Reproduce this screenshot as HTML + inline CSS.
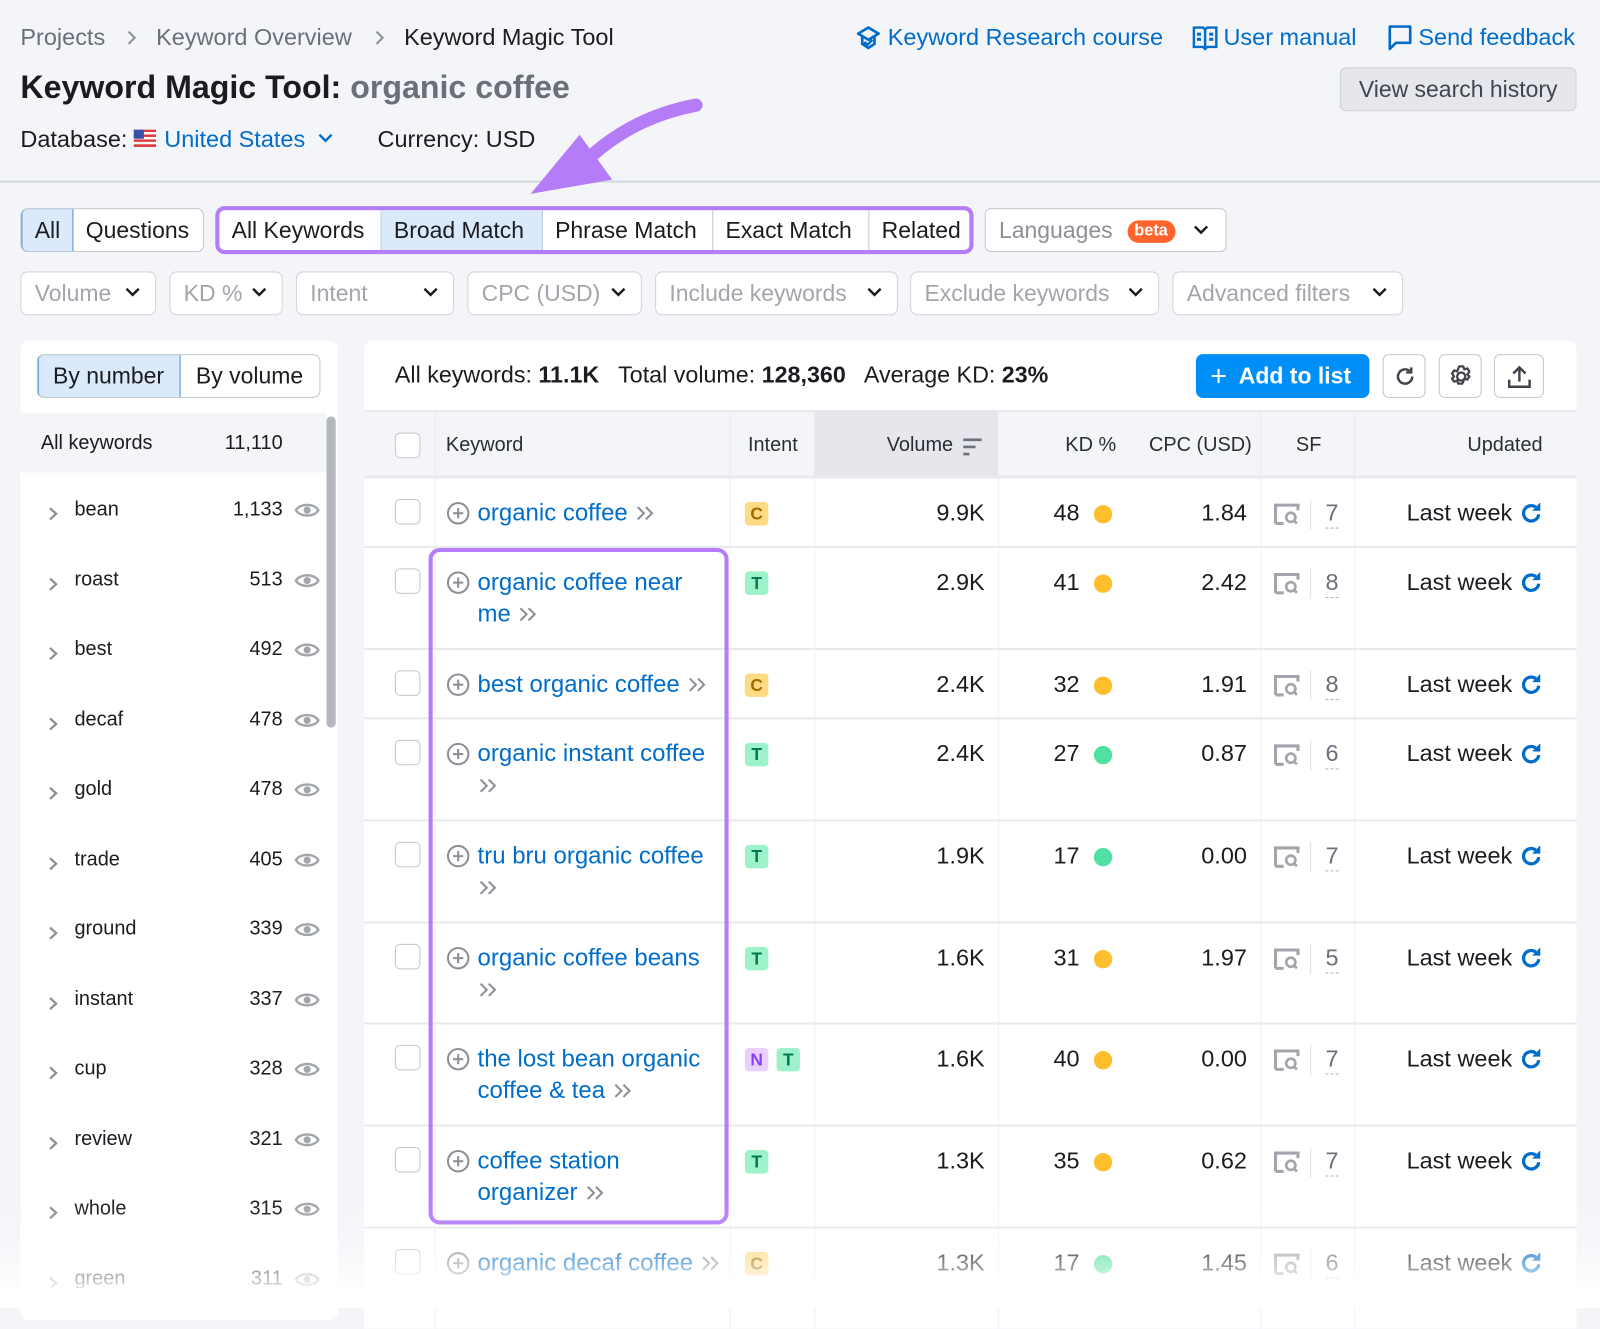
<!DOCTYPE html>
<html><head><meta charset="utf-8"><style>
*{box-sizing:border-box;margin:0;padding:0}
html,body{width:1600px;height:1303px;overflow:hidden;background:#f4f5f9}
body{font-family:"Liberation Sans",sans-serif;color:#1b1c21}
#w{position:absolute;left:0;top:0;width:1568px;height:1277px;transform:scale(1.020408);transform-origin:0 0;background:#f4f5f9}
.a{position:absolute;white-space:nowrap}
.bc{font-size:23px;color:#6c6e79;top:23px}
.lnk{color:#006dca}
.btn{position:absolute;background:#fff;border:1px solid #c4c7cf;border-radius:6px;height:43px;font-size:22.5px;line-height:41px}
.seg{position:absolute;top:0;height:100%;border-right:1px solid #c4c7cf;padding:0 12px}
.flt{position:absolute;top:266px;height:43px;background:#fff;border:1px solid #d1d4db;border-radius:7px;font-size:22.5px;color:#a3a5ad;line-height:41px;padding-left:13px}
.flt svg{position:absolute;right:14px;top:14px}
.li{position:absolute;left:0;width:300px;font-size:19.5px;height:30px;line-height:30px}
.li .c{position:absolute;left:27px;top:6px}
.li .t{position:absolute;left:53px}
.li .n{position:absolute;right:43px}
.li .e{position:absolute;right:6px;top:5px}
.row{position:absolute;left:357px;width:1188px;background:#fff;border-top:2px solid #e8e9ee}
.row>*{position:absolute}
.cb{left:30px;top:20px;width:25px;height:25px;border:1.5px solid #c4c7cf;border-radius:5px;background:#fff}
.kw{left:111px;top:18px;font-size:23.5px;line-height:31px;color:#006dca;width:238px;white-space:normal}
.pl{left:80px;top:22px}
.bd{top:23px;width:23px;height:23px;border-radius:4px;font-size:17px;line-height:23px;text-align:center;font-weight:bold}
.C{background:#ffda85;color:#a26a00}.T{background:#9ef2c9;color:#007a4d}.N{background:#e9d0ff;color:#8a3ffc}
.num{font-size:23px;top:18px;line-height:31px;text-align:right}
.dot{top:26px;width:18px;height:18px;border-radius:50%}
.y{background:#ffbe2e}.g{background:#4fe0a2}
.sf{left:891px;top:24px}
.sfd{left:927px;top:20px;width:1px;height:30px;background:#dedfe5}
.sfn{left:942px;top:18px;font-size:23px;line-height:31px;color:#6c6e79;border-bottom:1.5px dashed #b0b2ba;height:31px}
.lw{right:63px;top:18px;font-size:23px;line-height:31px}
.rf{right:32px;top:22px}
.vl{position:absolute;top:0;bottom:0;width:1px;background:#f0f1f4}
</style></head><body><div id="w">

<div class="a bc" style="left:20px">Projects</div>
<svg class="a" style="left:124px;top:29px" width="10" height="16"><path d="M2 2l6 6-6 6" stroke="#8d8f98" stroke-width="2" fill="none"/></svg>
<div class="a bc" style="left:153px">Keyword Overview</div>
<svg class="a" style="left:367px;top:29px" width="10" height="16"><path d="M2 2l6 6-6 6" stroke="#8d8f98" stroke-width="2" fill="none"/></svg>
<div class="a bc" style="left:396px;color:#1b1c21">Keyword Magic Tool</div>

<svg class="a" style="left:838px;top:24px" width="26" height="26" viewBox="0 0 26 26"><path d="M13 3L23 9 13 15 3 9z" fill="none" stroke="#006dca" stroke-width="2.6" stroke-linejoin="round"/><path d="M7 12v7l6 4 6-4v-7" fill="none" stroke="#006dca" stroke-width="2.6"/><path d="M9 17l3 3 5-5" fill="none" stroke="#006dca" stroke-width="2.4"/></svg>
<div class="a bc lnk" style="left:870px">Keyword Research course</div>
<svg class="a" style="left:1168px;top:24px" width="26" height="28" viewBox="0 0 26 28"><path d="M2 3h9l2 2 2-2h9v19h-9l-2 2-2-2H2z" fill="none" stroke="#006dca" stroke-width="2.4"/><path d="M13 5v19" stroke="#006dca" stroke-width="2.4"/><rect x="5" y="8" width="4" height="3" fill="#006dca"/><rect x="17" y="8" width="4" height="3" fill="#006dca"/><rect x="5" y="13" width="4" height="3" fill="#006dca"/><rect x="17" y="13" width="4" height="3" fill="#006dca"/></svg>
<div class="a bc lnk" style="left:1199px">User manual</div>
<svg class="a" style="left:1360px;top:24px" width="24" height="26" viewBox="0 0 24 26"><path d="M2 2h20v16H8l-6 6z" fill="none" stroke="#006dca" stroke-width="2.6" stroke-linejoin="round"/></svg>
<div class="a bc lnk" style="left:1390px">Send feedback</div>

<div class="a" style="left:20px;top:67px;font-size:31.5px;font-weight:bold">Keyword Magic Tool: <span style="color:#6c6e79">organic coffee</span></div>
<div class="btn" style="left:1313px;top:66px;width:232px;background:#e6e7ec;border-color:#cfd1d8;text-align:center;color:#42444d">View search history</div>

<div class="a" style="left:20px;top:123px;font-size:23px">Database:</div>
<svg class="a" style="left:131px;top:127px" width="22" height="17" viewBox="0 0 22 17"><rect width="22" height="17" fill="#fff"/><g fill="#e03a3e"><rect y="0" width="22" height="2.4"/><rect y="4.8" width="22" height="2.4"/><rect y="9.6" width="22" height="2.4"/><rect y="14.4" width="22" height="2.6"/></g><rect width="10" height="9" fill="#3c4fa8"/></svg>
<div class="a lnk" style="left:161px;top:123px;font-size:23px">United States</div>
<svg class="a" style="left:311px;top:130px" width="16" height="10"><path d="M2 2l6 6 6-6" stroke="#006dca" stroke-width="2.4" fill="none"/></svg>
<div class="a" style="left:370px;top:123px;font-size:23px">Currency: USD</div>

<div class="a" style="left:0;top:177px;width:1568px;height:2px;background:#d5d7de"></div>

<svg class="a" style="left:500px;top:90px" width="200" height="110" viewBox="0 0 200 110"><path d="M182 13C135 22 100 42 72 70" stroke="#b57cf7" stroke-width="13" fill="none" stroke-linecap="round"/><path d="M20 100L68 42 100 86z" fill="#b57cf7"/></svg>

<div class="btn" style="left:20px;top:204px;width:180px;border-radius:7px;overflow:hidden">
 <div class="seg" style="left:0;width:51px;background:#dbeafb;border:1px solid #4d8fd6;border-radius:6px 0 0 6px;top:-1px;height:43px">All</div>
 <div class="seg" style="left:51px;border:none;padding-left:12px">Questions</div>
</div>
<div class="a" style="left:211px;top:202px;width:743px;height:47px;border:4px solid #b57cf7;border-radius:9px;background:#fff;font-size:22.5px;line-height:39px;overflow:hidden">
 <div class="seg" style="left:0;width:159px;padding-left:12px">All Keywords</div>
 <div class="seg" style="left:159px;width:158px;background:#dbeafb;padding-left:12px">Broad Match</div>
 <div class="seg" style="left:317px;width:167px;padding-left:12px">Phrase Match</div>
 <div class="seg" style="left:484px;width:153px;padding-left:12px">Exact Match</div>
 <div class="seg" style="left:637px;border:none">Related</div>
</div>
<div class="btn" style="left:965px;top:204px;width:237px;color:#8d8f98;padding-left:13px">Languages <span style="display:inline-block;background:#ff642d;color:#fff;font-size:16px;font-weight:bold;line-height:22px;height:22px;border-radius:11px;padding:0 7px;vertical-align:2px;margin-left:8px">beta</span>
<svg style="position:absolute;right:16px;top:15px" width="16" height="11"><path d="M2 2l6 6 6-6" stroke="#1b1c21" stroke-width="2.4" fill="none"/></svg></div>

<div class="flt" style="left:20px;width:133px">Volume<svg width="16" height="11"><path d="M2 2l6 6 6-6" stroke="#1b1c21" stroke-width="2.4" fill="none"/></svg></div>
<div class="flt" style="left:166px;width:111px">KD %<svg width="16" height="11"><path d="M2 2l6 6 6-6" stroke="#1b1c21" stroke-width="2.4" fill="none"/></svg></div>
<div class="flt" style="left:290px;width:155px">Intent<svg width="16" height="11"><path d="M2 2l6 6 6-6" stroke="#1b1c21" stroke-width="2.4" fill="none"/></svg></div>
<div class="flt" style="left:458px;width:171px">CPC (USD)<svg width="16" height="11"><path d="M2 2l6 6 6-6" stroke="#1b1c21" stroke-width="2.4" fill="none"/></svg></div>
<div class="flt" style="left:642px;width:238px">Include keywords<svg width="16" height="11"><path d="M2 2l6 6 6-6" stroke="#1b1c21" stroke-width="2.4" fill="none"/></svg></div>
<div class="flt" style="left:892px;width:244px">Exclude keywords<svg width="16" height="11"><path d="M2 2l6 6 6-6" stroke="#1b1c21" stroke-width="2.4" fill="none"/></svg></div>
<div class="flt" style="left:1149px;width:226px">Advanced filters<svg width="16" height="11"><path d="M2 2l6 6 6-6" stroke="#1b1c21" stroke-width="2.4" fill="none"/></svg></div>

<div class="a" style="left:20px;top:334px;width:311px;height:960px;background:#fff;border-radius:8px">
 <div class="btn" style="left:16px;top:13px;width:278px;height:43px;border-radius:7px;overflow:hidden">
  <div class="seg" style="left:0;width:140px;background:#dbeafb;border:1px solid #4d8fd6;border-radius:6px 0 0 6px;top:-1px;height:43px;padding-left:14px">By number</div>
  <div class="seg" style="left:140px;border:none;padding-left:15px">By volume</div>
 </div>
 <div class="a" style="left:0;top:71px;width:300px;height:58px;background:#f4f5f9"></div>
 <div class="li" style="top:85px"><span class="t" style="left:20px">All keywords</span><span class="n" style="right:43px">11,110</span></div>
 <div class="a" style="left:300px;top:74px;width:9px;height:305px;background:#b4b6bd;border-radius:5px"></div>
</div>
<div id="lst" class="a" style="left:20px;top:0"></div>

<div class="a" style="left:357px;top:334px;width:1188px;height:960px;background:#fff;border-radius:8px"></div>
<div class="a" style="left:387px;top:354px;font-size:22.8px">All keywords: <b>11.1K</b>&nbsp;&nbsp; Total volume: <b>128,360</b>&nbsp;&nbsp; Average KD: <b>23%</b></div>
<div class="a" style="left:1172px;top:347px;width:170px;height:43px;background:#008ff8;border-radius:7px;color:#fff;font-size:22.5px;font-weight:bold;line-height:43px;padding-left:14px"><span style="font-size:28px;font-weight:normal;vertical-align:-2px">+</span>&nbsp; Add to list</div>
<div class="btn" style="left:1355px;top:347px;width:42px"><svg style="position:absolute;left:9px;top:9px" width="24" height="24" viewBox="0 0 24 24"><path d="M19 12a7 7 0 1 1-2.5-5.4" fill="none" stroke="#42444d" stroke-width="2.4"/><path d="M18 3v5h-5" fill="none" stroke="#42444d" stroke-width="2.4"/></svg></div>
<div class="btn" style="left:1410px;top:347px;width:42px"><svg style="position:absolute;left:8px;top:8px" width="26" height="26" viewBox="0 0 26 26"><circle cx="13" cy="13" r="4" fill="none" stroke="#42444d" stroke-width="2.2"/><path d="M11 3h4l1 3 3-1 2 3-2 3 2 2-2 3-3-1-1 3-1 2h-4l-1-3-3 1-2-3 2-2-2-3 2-3 3 1z" fill="none" stroke="#42444d" stroke-width="2.2" stroke-linejoin="round"/></svg></div>
<div class="btn" style="left:1464px;top:347px;width:49px"><svg style="position:absolute;left:12px;top:8px" width="24" height="26" viewBox="0 0 24 26"><path d="M12 18V4M6 10l6-6 6 6" fill="none" stroke="#42444d" stroke-width="2.4"/><path d="M2 16v7h20v-7" fill="none" stroke="#42444d" stroke-width="2.4"/></svg></div>

<div class="a" style="left:357px;top:402px;width:1188px;height:66px;background:#f4f5f9;border-top:2px solid #e8e9ee;border-bottom:2px solid #e8e9ee;font-size:19.5px;color:#2b2d35">
 <div class="a" style="left:441px;top:-2px;width:180px;height:66px;background:#e6e7ec"></div>
 <div class="cb" style="position:absolute;left:30px;top:20px"></div>
 <div class="vl" style="left:69px;background:#e8e9ee"></div>
 <span class="a" style="left:80px;top:21px">Keyword</span>
 <div class="vl" style="left:358px;background:#e8e9ee"></div>
 <span class="a" style="left:376px;top:21px">Intent</span>
 <span class="a" style="left:512px;top:21px">Volume</span>
 <svg class="a" style="left:586px;top:25px" width="20" height="18"><path d="M1 2h18M1 9h12M1 16h6" stroke="#6c6e79" stroke-width="2.5"/></svg>
 <span class="a" style="left:687px;top:21px">KD %</span>
 <span class="a" style="left:769px;top:21px">CPC (USD)</span>
 <div class="vl" style="left:878px;background:#e8e9ee"></div>
 <span class="a" style="left:913px;top:21px">SF</span>
 <div class="vl" style="left:970px;background:#e8e9ee"></div>
 <span class="a" style="left:1081px;top:21px">Updated</span>
</div>

<div id="rows"></div>

<div class="a" style="left:420px;top:537px;width:294px;height:663px;border:4px solid #b57cf7;border-radius:11px"></div>

<div class="a" style="left:0;top:1170px;width:1568px;height:110px;background:linear-gradient(rgba(255,255,255,0),rgba(255,255,255,0.15) 40%,rgba(255,255,255,0.85) 85%,#fff)"></div>
<div class="a" style="left:0;top:1262px;width:1568px;height:20px;background:#fff"></div>
</div>
<script>
var L=[["bean","1,133"],["roast","513"],["best","492"],["decaf","478"],["gold","478"],["trade","405"],["ground","339"],["instant","337"],["cup","328"],["review","321"],["whole","315"],["green","311"]];
var eye='<svg width="26" height="20" viewBox="0 0 26 20"><path d="M2 10C6 3 20 3 24 10 20 17 6 17 2 10z" fill="none" stroke="#a3a5ad" stroke-width="2.4"/><circle cx="13" cy="10" r="3.5" fill="#a3a5ad"/></svg>';
var chev='<svg width="10" height="15"><path d="M2 2l6 5.5-6 5.5" stroke="#8d8f98" stroke-width="2.2" fill="none"/></svg>';
var h='';L.forEach(function(r,i){var y=484+i*68.5;h+='<div class="li" style="top:'+y+'px"><span class="c">'+chev+'</span><span class="t">'+r[0]+'</span><span class="n">'+r[1]+'</span><span class="e">'+eye+'</span></div>';});
document.getElementById('lst').innerHTML=h;
var R=[[467,68,"organic coffee","C","9.9K","48","y","1.84","7"],[535,100,"organic coffee near me","T","2.9K","41","y","2.42","8"],[635,68,"best organic coffee","C","2.4K","32","y","1.91","8"],[703,100,"organic instant coffee","T","2.4K","27","g","0.87","6"],[803,100,"tru bru organic coffee","T","1.9K","17","g","0.00","7"],[903,99,"organic coffee beans","T","1.6K","31","y","1.97","5"],[1002,100,"the lost bean organic coffee &amp; tea","NT","1.6K","40","y","0.00","7"],[1102,100,"coffee station organizer","T","1.3K","35","y","0.62","7"],[1202,100,"organic decaf coffee","C","1.3K","17","g","1.45","6"]];
var plus='<svg width="24" height="24" viewBox="0 0 24 24"><circle cx="12" cy="12" r="10" fill="none" stroke="#8d8f98" stroke-width="2"/><path d="M12 7v10M7 12h10" stroke="#8d8f98" stroke-width="2"/></svg>';
var dbl=' <svg width="20" height="16" viewBox="0 0 20 16" style="vertical-align:-1px"><path d="M3 2l6 6-6 6M11 2l6 6-6 6" stroke="#8d8f98" stroke-width="2" fill="none"/></svg>';
var sf='<svg width="26" height="22" viewBox="0 0 26 22"><path d="M2 20V2h22v5" fill="none" stroke="#a3a5ad" stroke-width="3"/><path d="M2 20h8" stroke="#a3a5ad" stroke-width="3"/><circle cx="17" cy="14" r="4.5" fill="none" stroke="#a3a5ad" stroke-width="2.6"/><path d="M20 17l3 3" stroke="#a3a5ad" stroke-width="2.6"/></svg>';
var rf='<svg width="24" height="24" viewBox="0 0 24 24"><path d="M19 13a7.5 7.5 0 1 1-3-7" fill="none" stroke="#006dca" stroke-width="3.2"/><path d="M20 2v7h-7" fill="#006dca" stroke="#006dca" stroke-width="1"/></svg>';
var o='';R.forEach(function(r){var b='';var x=373;r[3].split('').forEach(function(c){b+='<div class="bd '+c+'" style="left:'+x+'px">'+c+'</div>';x+=31;});
o+='<div class="row" style="top:'+r[0]+'px;height:'+r[1]+'px"><div class="vl" style="left:69px"></div><div class="vl" style="left:358px"></div><div class="vl" style="left:441px"></div><div class="vl" style="left:621px"></div><div class="vl" style="left:878px"></div><div class="vl" style="left:970px"></div><div class="cb"></div><div class="pl">'+plus+'</div><div class="kw">'+r[2]+dbl+'</div>'+b+'<div class="num" style="right:580px">'+r[4]+'</div><div class="num" style="right:487px">'+r[5]+'</div><div class="dot '+r[6]+'" style="left:715px"></div><div class="num" style="right:323px">'+r[7]+'</div><div class="sf">'+sf+'</div><div class="sfd"></div><div class="sfn">'+r[8]+'</div><div class="lw">Last week</div><div class="rf">'+rf+'</div></div>';});
document.getElementById('rows').innerHTML=o;
</script>
</body></html>
